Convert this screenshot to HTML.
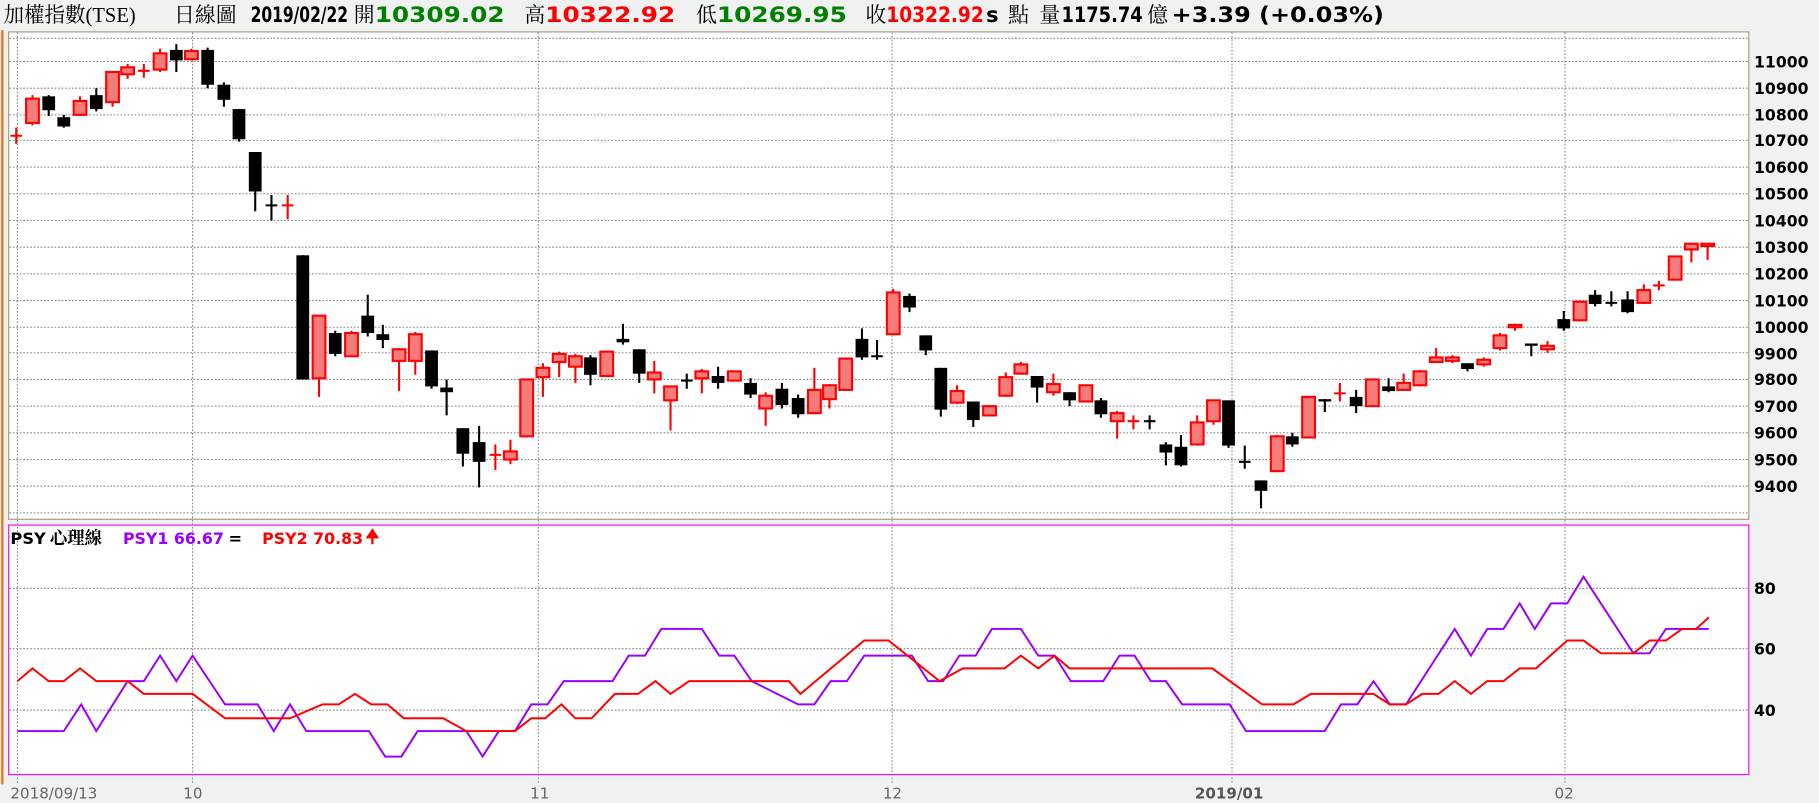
<!DOCTYPE html>
<html><head><meta charset="utf-8"><style>
html,body{margin:0;padding:0;background:#f0f2f2;overflow:hidden}
svg{display:block}
.h{font-family:"Liberation Serif","Noto Serif CJK SC",serif;font-size:18px;fill:#000}
.b{font-family:"DejaVu Sans","Liberation Sans",sans-serif;font-weight:bold;font-size:18px}
.ax{font-family:"DejaVu Sans",sans-serif;font-weight:bold;font-size:13.5px;fill:#000}
.dt{font-family:"DejaVu Sans","Liberation Sans",sans-serif;font-size:13px;fill:#666}
.p{font-family:"DejaVu Sans","Liberation Sans",sans-serif;font-weight:bold;font-size:14px}
</style></head><body>
<svg width="1819" height="803" viewBox="0 0 1568 692" preserveAspectRatio="none">
<rect x="0" y="0" width="1568" height="692" fill="#f0f2f2"/>
<rect x="1" y="26" width="2" height="650" fill="#f07020"/>
<text y="19" class="h" x="3" textLength="114" lengthAdjust="spacingAndGlyphs">加權指數(TSE)</text>
<text y="19" class="h" x="150" textLength="54" lengthAdjust="spacingAndGlyphs">日線圖</text>
<text y="19" class="h" x="305">開</text><text y="19" class="h" x="452">高</text><text y="19" class="h" x="600">低</text><text y="19" class="h" x="746">收</text><text y="19" class="h" x="869">點</text><text y="19" class="h" x="896">量</text><text y="19" class="h" x="989">億</text>
<g class="b">
<text x="216" y="19" textLength="84" lengthAdjust="spacingAndGlyphs">2019/02/22</text>
<text x="323" y="19" fill="#008000" textLength="112" lengthAdjust="spacingAndGlyphs">10309.02</text>
<text x="470" y="19" fill="#ff0000" textLength="112" lengthAdjust="spacingAndGlyphs">10322.92</text>
<text x="618" y="19" fill="#008000" textLength="112" lengthAdjust="spacingAndGlyphs">10269.95</text>
<text x="764" y="19" fill="#ff0000" textLength="84" lengthAdjust="spacingAndGlyphs">10322.92</text>
<text x="850" y="19">s</text>
<text x="915" y="19" textLength="70" lengthAdjust="spacingAndGlyphs">1175.74</text>
<text x="1010" y="19" textLength="183" lengthAdjust="spacingAndGlyphs">+3.39 (+0.03%)</text>
</g>
<rect x="7.5" y="27.5" width="1500" height="420" fill="#fff" stroke="#a89880"/>
<rect x="7.5" y="452.5" width="1500" height="215" fill="#fff" stroke="#ff00ff"/>
<g stroke="#888" stroke-dasharray="1.5,1.5" stroke-width="0.9">
<path d="M8 33H1507M8 53H1507M8 76H1507M8 99H1507M8 121H1507M8 144H1507M8 167H1507M8 190H1507M8 213H1507M8 236H1507M8 259H1507M8 282H1507M8 304H1507M8 327H1507M8 350H1507M8 373H1507M8 396H1507M8 419H1507M8 442H1507"/>
<path d="M8 507H1507M8 559H1507M8 612H1507"/>
<path d="M15 28V676M166 28V676M464 28V676M769 28V676M1062 28V676M1349 28V676"/>
</g>
<g class="ax">
<text x="1512" y="58">11000</text><text x="1512" y="81">10900</text><text x="1512" y="104">10800</text><text x="1512" y="126">10700</text><text x="1512" y="149">10600</text><text x="1512" y="172">10500</text><text x="1512" y="195">10400</text><text x="1512" y="218">10300</text><text x="1512" y="241">10200</text><text x="1512" y="264">10100</text><text x="1512" y="287">10000</text><text x="1512" y="310">9900</text><text x="1512" y="332">9800</text><text x="1512" y="355">9700</text><text x="1512" y="378">9600</text><text x="1512" y="401">9500</text><text x="1512" y="424">9400</text>
<text x="1512" y="512">80</text><text x="1512" y="564">60</text><text x="1512" y="617">40</text>
</g>
<g class="dt"><text x="9" y="688">2018/09/13</text><text x="158" y="688">10</text><text x="457" y="688">11</text><text x="761" y="688">12</text><text x="1030" y="688" font-weight="bold" fill="#555">2019/01</text><text x="1340" y="688">02</text></g>
<g stroke="#000" stroke-width="1.8" fill="#000">
<path d="M42 82V100M55 99V110M83 76V96M152 38V62M179 41V76M193 71V92M206 94V122M220 131V182M234 168V190M261 220V327M289 285V307M317 254V290M330 280V300M372 302V335M385 327V358M399 369V402M413 367V420M509 306V332M537 279V297M551 301V330M592 322V335M619 316V335M647 326V343M674 330V352M688 340V360M743 283V310M756 293V310M784 253V269M798 289V306M811 317V359M839 346V368M894 324V347M922 338V350M949 343V360M991 358V370M1005 381V401M1018 375V402M1059 345V386M1073 384V404M1087 414V438M1114 373V385M1142 344V355M1169 336V356M1197 326V338M1265 313V320M1320 296V307M1348 268V285M1375 250V264M1389 251V264M1403 251V270"/>
<path d="M229 177H239M587 328H597M751 307H761M986 363H996M1068 398H1078M1384 261H1394"/>
<g stroke="none">
<rect x="36.5" y="83" width="11" height="12"/><rect x="49.5" y="101" width="11" height="8"/><rect x="77.5" y="82" width="11" height="12"/><rect x="146.5" y="43" width="11" height="9"/><rect x="173.5" y="43" width="11" height="30"/><rect x="187.5" y="73" width="11" height="13"/><rect x="200.5" y="94" width="11" height="26"/><rect x="214.5" y="131" width="11" height="34"/><rect x="255.5" y="220" width="11" height="107"/><rect x="283.5" y="287" width="11" height="18"/><rect x="311.5" y="272" width="11" height="15"/><rect x="324.5" y="288" width="11" height="5"/><rect x="366.5" y="302" width="11" height="31"/><rect x="379.5" y="334" width="11" height="4"/><rect x="393.5" y="369" width="11" height="22"/><rect x="407.5" y="381" width="11" height="17"/><rect x="503.5" y="308" width="11" height="15"/><rect x="531.5" y="292" width="11" height="3"/><rect x="545.5" y="301" width="11" height="21"/><rect x="613.5" y="324" width="11" height="6"/><rect x="641.5" y="330" width="11" height="10"/><rect x="668.5" y="335" width="11" height="14"/><rect x="682.5" y="343" width="11" height="14"/><rect x="737.5" y="292" width="11" height="16"/><rect x="778.5" y="255" width="11" height="10"/><rect x="792.5" y="289" width="11" height="13"/><rect x="805.5" y="317" width="11" height="36"/><rect x="833.5" y="346" width="11" height="16"/><rect x="888.5" y="324" width="11" height="10"/><rect x="916.5" y="338" width="11" height="7"/><rect x="943.5" y="345" width="11" height="12"/><rect x="999.5" y="383" width="11" height="7"/><rect x="1012.5" y="385" width="11" height="16"/><rect x="1053.5" y="345" width="11" height="39"/><rect x="1081.5" y="414" width="11" height="9"/><rect x="1108.5" y="376" width="11" height="7"/><rect x="1136.5" y="344" width="11" height="2"/><rect x="1163.5" y="342" width="11" height="8"/><rect x="1191.5" y="333" width="11" height="4"/><rect x="1259.5" y="313" width="11" height="5"/><rect x="1314.5" y="296" width="11" height="2"/><rect x="1342.5" y="275" width="11" height="8"/><rect x="1369.5" y="254" width="11" height="8"/><rect x="1397.5" y="258" width="11" height="11"/>
</g></g>
<g stroke="#ff0000" stroke-width="1.8" fill="#f77b7b">
<path d="M14 110V124M28 82V108M69 83V100M97 62V92M110 55V68M124 55V67M138 42V62M165 42V52M248 168V189M275 272V342M303 285V307M344 300V337M358 286V323M427 383V405M440 379V400M454 327V377M468 313V342M482 303V325M496 305V330M523 303V324M564 311V339M578 333V371M605 318V339M633 320V328M660 338V367M702 317V357M715 331V352M729 309V337M770 249V289M825 332V348M853 350V358M867 321V342M880 312V323M908 322V341M936 332V346M963 354V378M977 358V370M1032 358V384M1046 345V366M1101 375V407M1128 342V377M1155 330V346M1183 327V350M1210 322V337M1224 319V333M1238 300V312M1252 306V313M1279 308V316M1293 287V302M1306 279V285M1334 294V304M1362 259V277M1417 245V262M1430 242V250M1444 221V241M1458 210V226M1472 210V224"/>
<path d="M9 117H19M119 61H129M243 177H253M422 392H432M972 363H982M1150 339H1160M1425 246H1435"/>
<rect x="22.5" y="85" width="11" height="21"/><rect x="63.5" y="87" width="11" height="12"/><rect x="91.5" y="62" width="11" height="26"/><rect x="104.5" y="58" width="11" height="6"/><rect x="132.5" y="46" width="11" height="14"/><rect x="159.5" y="44" width="11" height="7"/><rect x="269.5" y="272" width="11" height="54"/><rect x="297.5" y="287" width="11" height="20"/><rect x="338.5" y="301" width="11" height="10"/><rect x="352.5" y="288" width="11" height="23"/><rect x="434.5" y="389" width="11" height="7"/><rect x="448.5" y="327" width="11" height="49"/><rect x="462.5" y="317" width="11" height="8"/><rect x="476.5" y="305" width="11" height="7"/><rect x="490.5" y="307" width="11" height="9"/><rect x="517.5" y="303" width="11" height="21"/><rect x="558.5" y="321" width="11" height="6"/><rect x="572.5" y="333" width="11" height="12"/><rect x="599.5" y="320" width="11" height="6"/><rect x="627.5" y="320" width="11" height="8"/><rect x="654.5" y="341" width="11" height="11"/><rect x="696.5" y="336" width="11" height="20"/><rect x="709.5" y="332" width="11" height="12"/><rect x="723.5" y="309" width="11" height="27"/><rect x="764.5" y="252" width="11" height="36"/><rect x="819.5" y="337" width="11" height="10"/><rect x="847.5" y="350" width="11" height="8"/><rect x="861.5" y="325" width="11" height="16"/><rect x="874.5" y="314" width="11" height="8"/><rect x="902.5" y="331" width="11" height="7"/><rect x="930.5" y="332" width="11" height="14"/><rect x="957.5" y="356" width="11" height="7"/><rect x="1026.5" y="364" width="11" height="19"/><rect x="1040.5" y="345" width="11" height="18"/><rect x="1095.5" y="376" width="11" height="30"/><rect x="1122.5" y="342" width="11" height="35"/><rect x="1177.5" y="327" width="11" height="23"/><rect x="1204.5" y="330" width="11" height="6"/><rect x="1218.5" y="320" width="11" height="12"/><rect x="1232.5" y="308" width="11" height="4"/><rect x="1246.5" y="308" width="11" height="3"/><rect x="1273.5" y="310" width="11" height="4"/><rect x="1287.5" y="289" width="11" height="11"/><rect x="1300.5" y="280" width="11" height="2"/><rect x="1328.5" y="298" width="11" height="3"/><rect x="1356.5" y="260" width="11" height="16"/><rect x="1411.5" y="250" width="11" height="11"/><rect x="1438.5" y="221" width="11" height="20"/><rect x="1452.5" y="210" width="11" height="5"/><rect x="1466.5" y="210" width="11" height="2"/>
</g>
<text x="9" y="469" class="p" fill="#000">PSY</text>
<text x="43" y="469" font-family="'Noto Serif CJK SC',serif" font-size="15" font-weight="bold" fill="#000">心理線</text>
<text x="106" y="469" class="p" fill="#9900ff" textLength="87" lengthAdjust="spacingAndGlyphs">PSY1 66.67</text>
<text x="197" y="469" class="p" fill="#000">=</text>
<text x="226" y="469" class="p" fill="#ff0000" textLength="87" lengthAdjust="spacingAndGlyphs">PSY2 70.83</text>
<path d="M321 469V460M317 463L321 457L325 463Z" stroke="#f00" stroke-width="2" fill="#f00"/>
<polyline fill="none" stroke="#9900ff" stroke-width="1.7" points="15,630 55,630 70,607 83,630 110,587 124,587 138,565 152,587 166,565 194,607 222,607 236,630 250,607 264,630 318,630 332,652 346,652 360,630 402,630 416,652 430,630 444,630 458,607 472,607 486,587 528,587 542,565 556,565 570,542 605,542 620,565 633,565 648,587 688,607 702,607 716,587 730,587 745,565 786,565 800,587 813,587 827,565 841,565 855,542 880,542 895,565 909,565 923,587 951,587 965,565 978,565 992,587 1005,587 1019,607 1060,607 1074,630 1142,630 1156,607 1170,607 1184,587 1198,607 1212,607 1254,542 1268,565 1282,542 1296,542 1310,520 1323,542 1337,520 1351,520 1365,497 1408,563 1422,563 1436,542 1473,542"/>
<polyline fill="none" stroke="#ff0000" stroke-width="1.7" points="15,587 28,576 42,587 55,587 69,576 83,587 110,587 124,598 166,598 194,619 236,619 250,619 278,607 292,607 306,598 320,607 334,607 348,619 382,619 402,630 444,630 458,619 470,619 484,607 496,619 510,619 530,598 550,598 565,587 578,598 594,587 680,587 690,598 745,552 766,552 810,587 830,576 866,576 880,565 895,576 909,565 922,576 1045,576 1088,607 1115,607 1130,598 1184,598 1198,607 1212,607 1226,598 1240,598 1254,587 1268,598 1282,587 1296,587 1310,576 1324,576 1351,552 1365,552 1380,563 1408,563 1422,552 1436,552 1450,542 1462,542 1473,532"/>
</svg>
</body></html>
